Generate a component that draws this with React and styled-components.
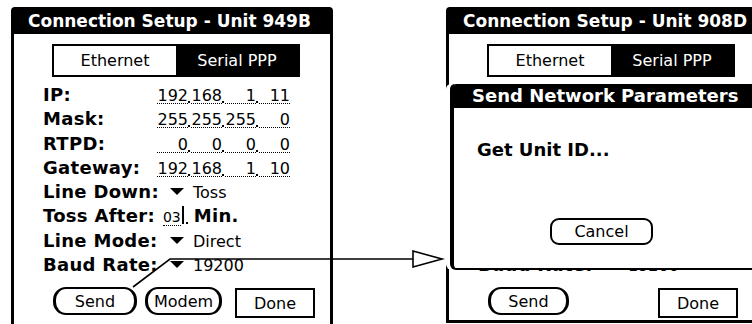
import React from 'react';
import styled, { createGlobalStyle } from 'styled-components';

const GlobalStyle = createGlobalStyle`
  body {
    margin: 0;
    background: #fff;
    font-family: "DejaVu Sans", Verdana, sans-serif;
    color: #000;
  }
`;

const FIELD_ROWS = [
  { label: 'IP:', parts: ['192', '168', '1', '11'] },
  { label: 'Mask:', parts: ['255', '255', '255', '0'] },
  { label: 'RTPD:', parts: ['0', '0', '0', '0'] },
  { label: 'Gateway:', parts: ['192', '168', '1', '10'] },
];

// covered: rows hidden behind the modal dialog keep their place but are not painted
const SetupForm = ({ covered }) => (
  <>
    <TabBox>
      <Tab>Ethernet</Tab>
      <Tab $selected>Serial PPP</Tab>
    </TabBox>
    <Rows>
      {FIELD_ROWS.map((row) => (
        <Row key={row.label} $hidden={covered}>
          <Label $w={114}>{row.label}</Label>
          <Values>
            {row.parts.map((p, i) => (
              <React.Fragment key={i}>
                {i > 0 && <Sep />}
                <Field>{p}</Field>
              </React.Fragment>
            ))}
          </Values>
        </Row>
      ))}
      <Row $hidden={covered}>
        <Label $w={127}>Line Down:</Label>
        <Popup><DownArrow />Toss</Popup>
      </Row>
      <Row $hidden={covered}>
        <Label $mr={8}>Toss After:</Label>
        <Values>
          <Field $auto>03</Field>
          <Cursor />
          <Sep />
        </Values>
        <Label $ml={5}>Min.</Label>
      </Row>
      <Row $hidden={covered}>
        <Label $w={127}>Line Mode:</Label>
        <Popup><DownArrow />Direct</Popup>
      </Row>
      <Row>
        <Label $w={127}>Baud Rate:</Label>
        <Popup><DownArrow />19200</Popup>
      </Row>
    </Rows>
  </>
);

const DownArrow = () => (
  <ArrowSvg width="14" height="7" viewBox="0 0 14 7">
    <polygon points="0,0 14,0 7,7" fill="#000" />
  </ArrowSvg>
);

export default function App() {
  return (
    <Page>
      <GlobalStyle />
      <Screen $height={330}>
        <TitleBar>Connection Setup - Unit 949B</TitleBar>
        <SetupForm />
        <ButtonRow>
          <PalmButton $w={84} $bold>Send</PalmButton>
          <PalmButton $w={77} $ml={8} $bold>Modem</PalmButton>
          <PalmButton $w={80} $ml={13} $rect>Done</PalmButton>
        </ButtonRow>
      </Screen>

      <Screen $height={316} $closed>
        <TitleBar>Connection Setup - Unit 908D</TitleBar>
        <SetupForm covered />
        <ButtonRow>
          <PalmButton $w={81} $bold>Send</PalmButton>
          <PalmButton $w={80} $ml={89} $rect>Done</PalmButton>
        </ButtonRow>

        <Dialog>
          <DialogTitle>Send Network Parameters</DialogTitle>
          <DialogBody>
            <Message>Get Unit ID...</Message>
            <CancelButton>Cancel</CancelButton>
          </DialogBody>
        </Dialog>
      </Screen>

      <Overlay width="752" height="324" viewBox="0 0 752 324">
        <polyline points="133,287 170,259 413,259" fill="none" stroke="#000" strokeWidth="1.6" />
        <polygon points="413,251 442,259 413,267" fill="#fff" stroke="#000" strokeWidth="1.6" />
      </Overlay>
    </Page>
  );
}

const Page = styled.div`
  position: relative;
  width: 752px;
  height: 324px;
  overflow: hidden;
  box-sizing: border-box;
  padding: 7px 0 0 11px;
  display: flex;
  align-items: flex-start;
  gap: 113px;
  background: #fff;
`;

const Screen = styled.div`
  position: relative;
  flex: none;
  width: 322px;
  height: ${(p) => p.$height}px;
  box-sizing: border-box;
  border: 3px solid #000;
  border-top: none;
  border-bottom: ${(p) => (p.$closed ? '3px solid #000' : 'none')};
  border-radius: 4px 4px 0 0;
  display: flex;
  flex-direction: column;
  background: #fff;
`;

const TitleBar = styled.div`
  height: 27px;
  line-height: 28px;
  padding-left: 14px;
  background: #000;
  color: #fff;
  font-size: 17px;
  font-weight: bold;
  white-space: nowrap;
`;

const TabBox = styled.div`
  display: flex;
  width: 248px;
  height: 33px;
  margin: 10px 0 0 38px;
  box-sizing: border-box;
  border: 2px solid #000;
`;

const Tab = styled.div`
  flex: 1;
  display: flex;
  align-items: center;
  justify-content: center;
  font-size: 16px;
  background: ${(p) => (p.$selected ? '#000' : '#fff')};
  color: ${(p) => (p.$selected ? '#fff' : '#000')};
`;

const Rows = styled.div`
  margin-top: 6px;
  padding-left: 29px;
`;

const Row = styled.div`
  display: flex;
  align-items: baseline;
  height: 24.3px;
  line-height: 24px;
  white-space: nowrap;
  visibility: ${(p) => (p.$hidden ? 'hidden' : 'visible')};
`;

const Label = styled.span`
  flex: none;
  width: ${(p) => (p.$w ? `${p.$w}px` : 'auto')};
  margin-right: ${(p) => p.$mr || 0}px;
  margin-left: ${(p) => p.$ml || 0}px;
  font-size: 18px;
  font-weight: bold;
  letter-spacing: 0.3px;
`;

const Values = styled.span`
  display: inline-flex;
  align-items: baseline;
`;

const Field = styled.span`
  display: inline-block;
  width: ${(p) => (p.$auto ? 'auto' : '31px')};
  text-align: right;
  font-size: ${(p) => (p.$auto ? '14px' : '16px')};
  line-height: 15px;
  border-bottom: 1px dotted #000;
`;

const Sep = styled.span`
  display: inline-block;
  width: 2px;
  height: 2px;
  margin: 0 1px 0 0;
  background: #000;
  transform: translateY(2px);
`;

const Cursor = styled.span`
  display: inline-block;
  width: 2px;
  height: 18px;
  margin: 0 2px 0 1px;
  background: #000;
  transform: translateY(2px);
`;

const Popup = styled.span`
  font-size: 16px;
`;

const ArrowSvg = styled.svg`
  vertical-align: 3px;
  margin-right: 9px;
`;

const ButtonRow = styled.div`
  display: flex;
  align-items: flex-start;
  margin-top: 10px;
  padding-left: 39px;
`;

const PalmButton = styled.div`
  flex: none;
  box-sizing: border-box;
  width: ${(p) => p.$w}px;
  height: ${(p) => (p.$rect ? 30 : 28)}px;
  margin-left: ${(p) => p.$ml || 0}px;
  margin-top: ${(p) => (p.$rect ? 1 : 0)}px;
  display: flex;
  align-items: center;
  justify-content: center;
  font-size: 16px;
  background: #fff;
  border: 2px solid #000;
  border-left-width: ${(p) => (p.$bold ? 3 : 2)}px;
  border-right-width: ${(p) => (p.$bold ? 3 : 2)}px;
  border-radius: ${(p) => (p.$rect ? 0 : 13)}px;
`;

const Dialog = styled.div`
  position: absolute;
  top: 77px;
  left: 1px;
  right: -40px;
  height: 186px;
  box-sizing: border-box;
  display: flex;
  flex-direction: column;
  background: #fff;
  border-left: 4px solid #000;
  border-bottom: 2px solid #000;
  border-radius: 5px 0 0 6px;
  box-shadow: -4px 0 0 #fff;
`;

const DialogTitle = styled.div`
  height: 24px;
  line-height: 24px;
  padding-left: 18px;
  background: #000;
  color: #fff;
  font-size: 18px;
  font-weight: bold;
  white-space: nowrap;
  border-top-left-radius: 2px;
`;

const DialogBody = styled.div`
  flex: 1;
  display: flex;
  flex-direction: column;
  align-items: flex-start;
  padding: 30px 0 0 23px;
`;

const Message = styled.div`
  font-size: 18px;
  font-weight: bold;
  line-height: 24px;
`;

const CancelButton = styled.div`
  box-sizing: border-box;
  width: 103px;
  height: 27px;
  margin: 56px 0 0 73px;
  display: flex;
  align-items: center;
  justify-content: center;
  font-size: 16px;
  border: 2px solid #000;
  border-radius: 9px;
`;

const Overlay = styled.svg`
  position: absolute;
  left: 0;
  top: 0;
  pointer-events: none;
`;
